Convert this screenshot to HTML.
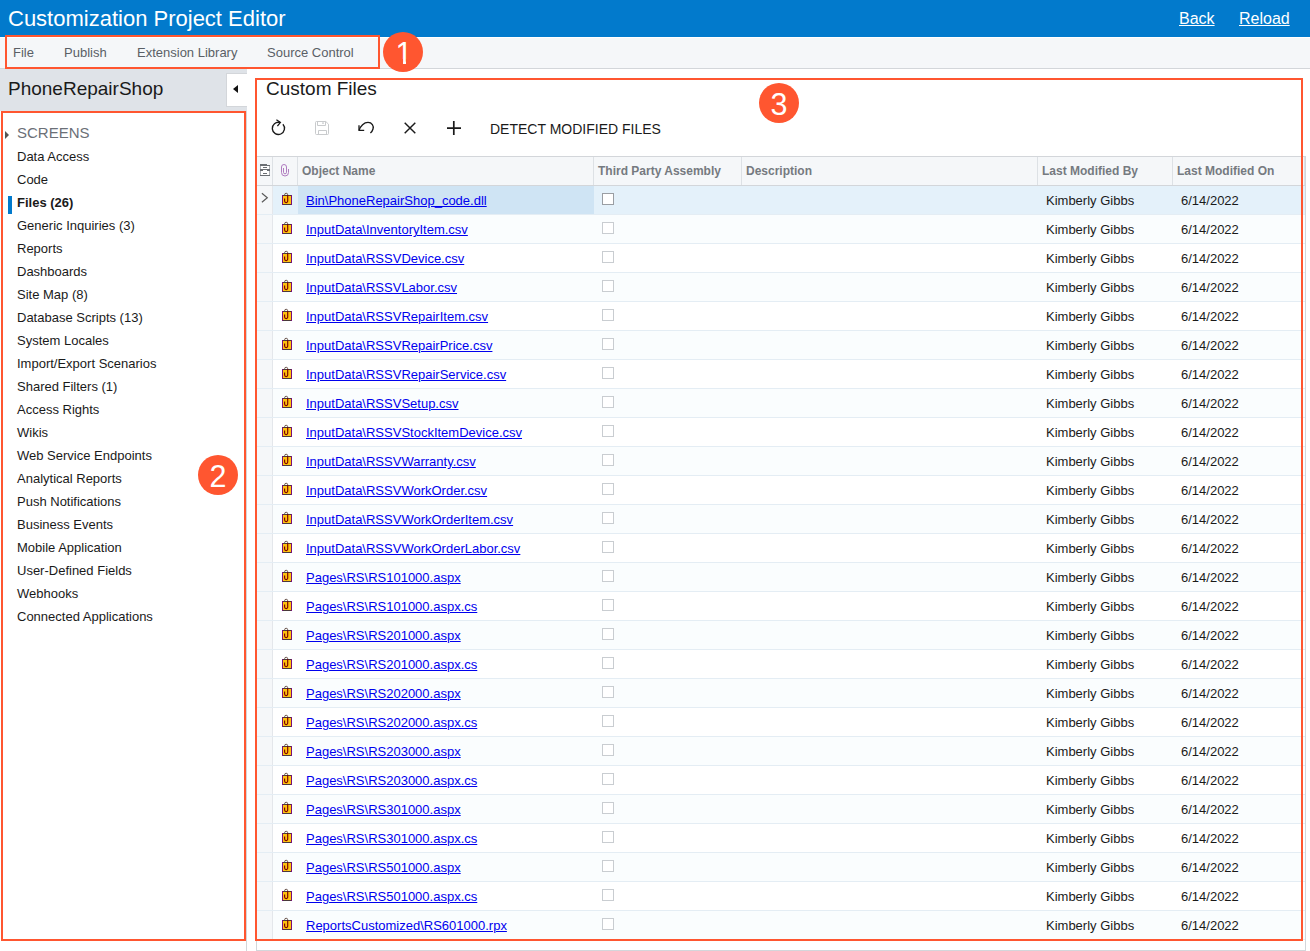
<!DOCTYPE html><html><head><meta charset="utf-8"><title>Customization Project Editor</title><style>*{box-sizing:border-box;margin:0;padding:0}
html,body{width:1310px;height:951px;overflow:hidden;background:#fff;font-family:"Liberation Sans",Arial,sans-serif;font-size:13px;color:#1a1a1a}
body{position:relative}
#hdr{position:absolute;left:0;top:0;width:1310px;height:37px;background:#027acc}
#hdr .ttl{position:absolute;left:8px;top:6px;font-size:22px;line-height:26px;color:#fff;white-space:nowrap}
#hdr .lnk{position:absolute;top:9px;font-size:16px;line-height:20px;color:#fff;text-decoration:underline}
#back{left:1179px}#reload{left:1239px}
#menu{position:absolute;left:0;top:37px;width:1310px;height:32px;background:#f5f7f9;border-top:1px solid #fff;border-bottom:1px solid #d3d6da}
#menu span{position:absolute;top:7px;line-height:16px;font-size:13px;color:#5a5f66;white-space:nowrap}
#lhead{position:absolute;left:0;top:69px;width:247px;height:42px;background:#dfe3e8}
#lhead span{position:absolute;left:8px;top:9px;font-size:19px;line-height:22px;color:#1a1a1a}
#collapse{position:absolute;left:226px;top:73px;width:21px;height:34px;background:#fff;border:1px solid #d3d6da;border-right:0}
#collapse i{position:absolute;left:6px;top:11px;border-right:5px solid #111;border-top:4px solid transparent;border-bottom:4px solid transparent}
#nav{position:absolute;left:0;top:111px;width:247px;height:840px;background:#fff;border-right:1px solid #d3d6da}
#nav .scr{position:absolute;left:17px;top:14px;font-size:15px;line-height:16px;color:#6b7077}
#nav .scr i{position:absolute;left:-12px;top:6px;border-left:4.5px solid #555;border-top:4px solid transparent;border-bottom:4px solid transparent}
#nav .ni{position:absolute;left:17px;margin-top:-110px;line-height:16px;font-size:13px;color:#1a1a1a;white-space:nowrap}
#nav .ni.sel{font-weight:bold}
#nav .ni.sel:before{content:"";position:absolute;left:-9px;top:1px;width:4px;height:18px;background:#027acc}
#main{position:absolute;left:0;top:0}
.ct{position:absolute;left:266px;top:77.5px;font-size:19px;line-height:22px;color:#1a1a1a;white-space:nowrap}
.tb{position:absolute}
.dmf{position:absolute;left:490px;top:121px;line-height:16px;font-size:14px;color:#1a1a1a;white-space:nowrap}
#grid{position:absolute;left:256px;top:156px;width:1050px;height:795px;overflow:hidden;border:1px solid #d3d6da}
.gh{position:absolute;left:0;top:0;width:1048px;height:29px;background:#f5f7f9;border-bottom:1px solid #d3d6da}
.hc{position:absolute;top:0;height:28px;border-right:1px solid #dde1e5}
.hc span{position:absolute;left:4px;top:6px;line-height:16px;font-size:12px;font-weight:bold;color:#757a80;white-space:nowrap}
.gr{position:absolute;left:0;width:1048px;height:29px;border-bottom:1px solid #e4edf4;background:#fff}
.gr.alt{background:#fafdfe}
.gr.sel{background:#e4f1fa}
.gr>div{position:absolute;top:0;height:28px;line-height:16px;white-space:nowrap}
.c0{left:0;width:16px;background:#f5f7f9;border-right:1px solid #e4e7eb}
.c0 svg{position:absolute;left:4px;top:6px}
.c1{left:16px;width:25px}
.c1 svg{position:absolute;left:8px;top:6px}
.c2{left:41px;width:296px;padding:7px 0 0 8px}
.gr.sel .c2{background:#cfe4f4}
.c2 a{color:#0000ee;text-decoration:underline}
.c3{left:337px;width:148px}
.c3 i{position:absolute;left:8px;top:7px;width:12px;height:12px;border:1px solid #c9cdd1;background:#fff}
.gr.sel .c3 i{border-color:#9a9ea3}
.c4{left:485px;width:296px}
.c5{left:781px;width:135px;padding:7px 0 0 8px}
.c6{left:916px;width:132px;padding:7px 0 0 8px}
.rb{position:absolute;border:2px solid #ff5630}
.cir{position:absolute;width:40px;height:40px;border-radius:50%;background:#ff5630;color:#fff;font-size:30.5px;line-height:42px;text-align:center}
.cir.one{padding-left:2px}
.cir.one:before,.cir.one:after{content:"";position:absolute;top:27px;height:7px;width:9px;background:#ff5630}
.cir.one:before{left:11px}
.cir.one:after{left:23px}
</style></head><body>
<div id="hdr"><span class="ttl">Customization Project Editor</span><a class="lnk" id="back">Back</a><a class="lnk" id="reload">Reload</a></div>
<div id="menu"><span style="left:13px">File</span><span style="left:64px">Publish</span><span style="left:137px">Extension Library</span><span style="left:267px">Source Control</span></div>
<div id="lhead"><span>PhoneRepairShop</span></div><div id="collapse"><i></i></div>
<div id="nav">
<div class="scr"><i></i>SCREENS</div>
<div class="ni" style="top:148px">Data Access</div>
<div class="ni" style="top:171px">Code</div>
<div class="ni sel" style="top:194px">Files (26)</div>
<div class="ni" style="top:217px">Generic Inquiries (3)</div>
<div class="ni" style="top:240px">Reports</div>
<div class="ni" style="top:263px">Dashboards</div>
<div class="ni" style="top:286px">Site Map (8)</div>
<div class="ni" style="top:309px">Database Scripts (13)</div>
<div class="ni" style="top:332px">System Locales</div>
<div class="ni" style="top:355px">Import/Export Scenarios</div>
<div class="ni" style="top:378px">Shared Filters (1)</div>
<div class="ni" style="top:401px">Access Rights</div>
<div class="ni" style="top:424px">Wikis</div>
<div class="ni" style="top:447px">Web Service Endpoints</div>
<div class="ni" style="top:470px">Analytical Reports</div>
<div class="ni" style="top:493px">Push Notifications</div>
<div class="ni" style="top:516px">Business Events</div>
<div class="ni" style="top:539px">Mobile Application</div>
<div class="ni" style="top:562px">User-Defined Fields</div>
<div class="ni" style="top:585px">Webhooks</div>
<div class="ni" style="top:608px">Connected Applications</div>
</div>
<div id="main"><div class="ct">Custom Files</div>
<svg class="tb" style="left:260px;top:112px" width="220" height="34" viewBox="260 112 220 34" fill="none" stroke="#1a1a1a" stroke-width="1.35">
<path d="M282.9 124.3 A6.1 6.1 0 1 1 279.9 122.5"/><path d="M276.4 119.8 L280.4 122.4 L277.4 126.2" stroke-width="1.3"/>
<g stroke="#c9cbcd" stroke-width="1"><path d="M316.5 121.5 H325.8 L328.5 124.2 V133.5 A1 1 0 0 1 327.5 134.5 H316.5 A1 1 0 0 1 315.5 133.5 V122.5 A1 1 0 0 1 316.5 121.5 Z"/><path d="M317.5 121.5 V125.5 H325.5 V121.5 M318.5 134.5 V130.5 H326.5 V134.5"/><path d="M323 122.2 V124" stroke-width="1.4"/></g>
<path d="M359.2 130 C360.5 126 364 122.4 368 122.4 C372 122.4 374 126 373 129 C372.5 130.8 371.6 132 370.4 133"/><path d="M359 125.3 V130.4 H364.2" stroke-width="1.3"/>
<path d="M404.7 122.7 L415.3 133.3 M415.3 122.7 L404.7 133.3" stroke-width="1.45"/>
<path d="M453.8 121 V135 M447 128.1 H461" stroke-width="1.7"/>
</svg>
<div class="dmf">DETECT MODIFIED FILES</div>
<div id="grid"><div class="gh">
<div class="hc" style="left:0;width:16px"><svg width="10" height="12" viewBox="0 0 10 12" style="position:absolute;left:3px;top:7px"><rect x="0.5" y="1.5" width="9" height="10" fill="#fff" stroke="#a9adb2" stroke-width="1"/><path d="M0 1.5 H10 M0 11.5 H10" stroke="#6a6e73" stroke-width="1"/><path d="M0 0.5 H7 M0 6 H10 M3 3.5 H7 M3 9.5 H7" fill="none" stroke="#6a6e73" stroke-width="1"/><path d="M0 6 H10" stroke="#6a6e73" stroke-width="2"/><path d="M3 6.5 H7" stroke="#fff" stroke-width="1"/></svg></div>
<div class="hc" style="left:16px;width:25px"><svg width="10" height="14" viewBox="0 0 10 14" style="position:absolute;left:7px;top:6px"><path d="M3.5 5 V9.3 A1.5 1.5 0 0 0 6.5 9.3 V4 A2.5 2.5 0 0 0 1.5 4 V9.5 A3.5 3.5 0 0 0 8.5 9.5 V6" fill="none" stroke="#b07cc0" stroke-width="1"/></svg></div>
<div class="hc" style="left:41px;width:296px"><span>Object Name</span></div>
<div class="hc" style="left:337px;width:148px"><span>Third Party Assembly</span></div>
<div class="hc" style="left:485px;width:296px"><span>Description</span></div>
<div class="hc" style="left:781px;width:135px"><span>Last Modified By</span></div>
<div class="hc" style="left:916px;width:132px"><span>Last Modified On</span></div>
</div>
<div class="gr sel" style="top:29px">
<div class="c0"><svg width="8" height="12" viewBox="0 0 8 12"><path d="M0.9 1.2 L6.3 5.75 L0.9 10.3" fill="none" stroke="#5a5a5a" stroke-width="1.2"/></svg></div>
<div class="c1"><svg width="12" height="14" viewBox="0 0 12 14"><rect x="1" y="3" width="10" height="10" fill="#ffc20e"/><path d="M1 3.5 H11 M1 12.5 H11" stroke="#4a3a3a" stroke-width="1"/><path d="M1.5 3 V13 M10.5 3 V13" stroke="#7a0f78" stroke-width="1"/><path d="M3.6 3.2 V2.8 A1.55 1.55 0 0 1 6.7 2.8 V3.2" fill="none" stroke="#6e5a52" stroke-width="1"/><path d="M6.7 3 V9 A1.55 1.55 0 0 1 3.6 9 V6.4" fill="none" stroke="#7a0000" stroke-width="1.15"/></svg></div>
<div class="c2"><a>Bin\PhoneRepairShop_code.dll</a></div>
<div class="c3"><i></i></div>
<div class="c4"></div>
<div class="c5">Kimberly Gibbs</div>
<div class="c6">6/14/2022</div>
</div>
<div class="gr alt" style="top:58px">
<div class="c0"></div>
<div class="c1"><svg width="12" height="14" viewBox="0 0 12 14"><rect x="1" y="3" width="10" height="10" fill="#ffc20e"/><path d="M1 3.5 H11 M1 12.5 H11" stroke="#4a3a3a" stroke-width="1"/><path d="M1.5 3 V13 M10.5 3 V13" stroke="#7a0f78" stroke-width="1"/><path d="M3.6 3.2 V2.8 A1.55 1.55 0 0 1 6.7 2.8 V3.2" fill="none" stroke="#6e5a52" stroke-width="1"/><path d="M6.7 3 V9 A1.55 1.55 0 0 1 3.6 9 V6.4" fill="none" stroke="#7a0000" stroke-width="1.15"/></svg></div>
<div class="c2"><a>InputData\InventoryItem.csv</a></div>
<div class="c3"><i></i></div>
<div class="c4"></div>
<div class="c5">Kimberly Gibbs</div>
<div class="c6">6/14/2022</div>
</div>
<div class="gr" style="top:87px">
<div class="c0"></div>
<div class="c1"><svg width="12" height="14" viewBox="0 0 12 14"><rect x="1" y="3" width="10" height="10" fill="#ffc20e"/><path d="M1 3.5 H11 M1 12.5 H11" stroke="#4a3a3a" stroke-width="1"/><path d="M1.5 3 V13 M10.5 3 V13" stroke="#7a0f78" stroke-width="1"/><path d="M3.6 3.2 V2.8 A1.55 1.55 0 0 1 6.7 2.8 V3.2" fill="none" stroke="#6e5a52" stroke-width="1"/><path d="M6.7 3 V9 A1.55 1.55 0 0 1 3.6 9 V6.4" fill="none" stroke="#7a0000" stroke-width="1.15"/></svg></div>
<div class="c2"><a>InputData\RSSVDevice.csv</a></div>
<div class="c3"><i></i></div>
<div class="c4"></div>
<div class="c5">Kimberly Gibbs</div>
<div class="c6">6/14/2022</div>
</div>
<div class="gr alt" style="top:116px">
<div class="c0"></div>
<div class="c1"><svg width="12" height="14" viewBox="0 0 12 14"><rect x="1" y="3" width="10" height="10" fill="#ffc20e"/><path d="M1 3.5 H11 M1 12.5 H11" stroke="#4a3a3a" stroke-width="1"/><path d="M1.5 3 V13 M10.5 3 V13" stroke="#7a0f78" stroke-width="1"/><path d="M3.6 3.2 V2.8 A1.55 1.55 0 0 1 6.7 2.8 V3.2" fill="none" stroke="#6e5a52" stroke-width="1"/><path d="M6.7 3 V9 A1.55 1.55 0 0 1 3.6 9 V6.4" fill="none" stroke="#7a0000" stroke-width="1.15"/></svg></div>
<div class="c2"><a>InputData\RSSVLabor.csv</a></div>
<div class="c3"><i></i></div>
<div class="c4"></div>
<div class="c5">Kimberly Gibbs</div>
<div class="c6">6/14/2022</div>
</div>
<div class="gr" style="top:145px">
<div class="c0"></div>
<div class="c1"><svg width="12" height="14" viewBox="0 0 12 14"><rect x="1" y="3" width="10" height="10" fill="#ffc20e"/><path d="M1 3.5 H11 M1 12.5 H11" stroke="#4a3a3a" stroke-width="1"/><path d="M1.5 3 V13 M10.5 3 V13" stroke="#7a0f78" stroke-width="1"/><path d="M3.6 3.2 V2.8 A1.55 1.55 0 0 1 6.7 2.8 V3.2" fill="none" stroke="#6e5a52" stroke-width="1"/><path d="M6.7 3 V9 A1.55 1.55 0 0 1 3.6 9 V6.4" fill="none" stroke="#7a0000" stroke-width="1.15"/></svg></div>
<div class="c2"><a>InputData\RSSVRepairItem.csv</a></div>
<div class="c3"><i></i></div>
<div class="c4"></div>
<div class="c5">Kimberly Gibbs</div>
<div class="c6">6/14/2022</div>
</div>
<div class="gr alt" style="top:174px">
<div class="c0"></div>
<div class="c1"><svg width="12" height="14" viewBox="0 0 12 14"><rect x="1" y="3" width="10" height="10" fill="#ffc20e"/><path d="M1 3.5 H11 M1 12.5 H11" stroke="#4a3a3a" stroke-width="1"/><path d="M1.5 3 V13 M10.5 3 V13" stroke="#7a0f78" stroke-width="1"/><path d="M3.6 3.2 V2.8 A1.55 1.55 0 0 1 6.7 2.8 V3.2" fill="none" stroke="#6e5a52" stroke-width="1"/><path d="M6.7 3 V9 A1.55 1.55 0 0 1 3.6 9 V6.4" fill="none" stroke="#7a0000" stroke-width="1.15"/></svg></div>
<div class="c2"><a>InputData\RSSVRepairPrice.csv</a></div>
<div class="c3"><i></i></div>
<div class="c4"></div>
<div class="c5">Kimberly Gibbs</div>
<div class="c6">6/14/2022</div>
</div>
<div class="gr" style="top:203px">
<div class="c0"></div>
<div class="c1"><svg width="12" height="14" viewBox="0 0 12 14"><rect x="1" y="3" width="10" height="10" fill="#ffc20e"/><path d="M1 3.5 H11 M1 12.5 H11" stroke="#4a3a3a" stroke-width="1"/><path d="M1.5 3 V13 M10.5 3 V13" stroke="#7a0f78" stroke-width="1"/><path d="M3.6 3.2 V2.8 A1.55 1.55 0 0 1 6.7 2.8 V3.2" fill="none" stroke="#6e5a52" stroke-width="1"/><path d="M6.7 3 V9 A1.55 1.55 0 0 1 3.6 9 V6.4" fill="none" stroke="#7a0000" stroke-width="1.15"/></svg></div>
<div class="c2"><a>InputData\RSSVRepairService.csv</a></div>
<div class="c3"><i></i></div>
<div class="c4"></div>
<div class="c5">Kimberly Gibbs</div>
<div class="c6">6/14/2022</div>
</div>
<div class="gr alt" style="top:232px">
<div class="c0"></div>
<div class="c1"><svg width="12" height="14" viewBox="0 0 12 14"><rect x="1" y="3" width="10" height="10" fill="#ffc20e"/><path d="M1 3.5 H11 M1 12.5 H11" stroke="#4a3a3a" stroke-width="1"/><path d="M1.5 3 V13 M10.5 3 V13" stroke="#7a0f78" stroke-width="1"/><path d="M3.6 3.2 V2.8 A1.55 1.55 0 0 1 6.7 2.8 V3.2" fill="none" stroke="#6e5a52" stroke-width="1"/><path d="M6.7 3 V9 A1.55 1.55 0 0 1 3.6 9 V6.4" fill="none" stroke="#7a0000" stroke-width="1.15"/></svg></div>
<div class="c2"><a>InputData\RSSVSetup.csv</a></div>
<div class="c3"><i></i></div>
<div class="c4"></div>
<div class="c5">Kimberly Gibbs</div>
<div class="c6">6/14/2022</div>
</div>
<div class="gr" style="top:261px">
<div class="c0"></div>
<div class="c1"><svg width="12" height="14" viewBox="0 0 12 14"><rect x="1" y="3" width="10" height="10" fill="#ffc20e"/><path d="M1 3.5 H11 M1 12.5 H11" stroke="#4a3a3a" stroke-width="1"/><path d="M1.5 3 V13 M10.5 3 V13" stroke="#7a0f78" stroke-width="1"/><path d="M3.6 3.2 V2.8 A1.55 1.55 0 0 1 6.7 2.8 V3.2" fill="none" stroke="#6e5a52" stroke-width="1"/><path d="M6.7 3 V9 A1.55 1.55 0 0 1 3.6 9 V6.4" fill="none" stroke="#7a0000" stroke-width="1.15"/></svg></div>
<div class="c2"><a>InputData\RSSVStockItemDevice.csv</a></div>
<div class="c3"><i></i></div>
<div class="c4"></div>
<div class="c5">Kimberly Gibbs</div>
<div class="c6">6/14/2022</div>
</div>
<div class="gr alt" style="top:290px">
<div class="c0"></div>
<div class="c1"><svg width="12" height="14" viewBox="0 0 12 14"><rect x="1" y="3" width="10" height="10" fill="#ffc20e"/><path d="M1 3.5 H11 M1 12.5 H11" stroke="#4a3a3a" stroke-width="1"/><path d="M1.5 3 V13 M10.5 3 V13" stroke="#7a0f78" stroke-width="1"/><path d="M3.6 3.2 V2.8 A1.55 1.55 0 0 1 6.7 2.8 V3.2" fill="none" stroke="#6e5a52" stroke-width="1"/><path d="M6.7 3 V9 A1.55 1.55 0 0 1 3.6 9 V6.4" fill="none" stroke="#7a0000" stroke-width="1.15"/></svg></div>
<div class="c2"><a>InputData\RSSVWarranty.csv</a></div>
<div class="c3"><i></i></div>
<div class="c4"></div>
<div class="c5">Kimberly Gibbs</div>
<div class="c6">6/14/2022</div>
</div>
<div class="gr" style="top:319px">
<div class="c0"></div>
<div class="c1"><svg width="12" height="14" viewBox="0 0 12 14"><rect x="1" y="3" width="10" height="10" fill="#ffc20e"/><path d="M1 3.5 H11 M1 12.5 H11" stroke="#4a3a3a" stroke-width="1"/><path d="M1.5 3 V13 M10.5 3 V13" stroke="#7a0f78" stroke-width="1"/><path d="M3.6 3.2 V2.8 A1.55 1.55 0 0 1 6.7 2.8 V3.2" fill="none" stroke="#6e5a52" stroke-width="1"/><path d="M6.7 3 V9 A1.55 1.55 0 0 1 3.6 9 V6.4" fill="none" stroke="#7a0000" stroke-width="1.15"/></svg></div>
<div class="c2"><a>InputData\RSSVWorkOrder.csv</a></div>
<div class="c3"><i></i></div>
<div class="c4"></div>
<div class="c5">Kimberly Gibbs</div>
<div class="c6">6/14/2022</div>
</div>
<div class="gr alt" style="top:348px">
<div class="c0"></div>
<div class="c1"><svg width="12" height="14" viewBox="0 0 12 14"><rect x="1" y="3" width="10" height="10" fill="#ffc20e"/><path d="M1 3.5 H11 M1 12.5 H11" stroke="#4a3a3a" stroke-width="1"/><path d="M1.5 3 V13 M10.5 3 V13" stroke="#7a0f78" stroke-width="1"/><path d="M3.6 3.2 V2.8 A1.55 1.55 0 0 1 6.7 2.8 V3.2" fill="none" stroke="#6e5a52" stroke-width="1"/><path d="M6.7 3 V9 A1.55 1.55 0 0 1 3.6 9 V6.4" fill="none" stroke="#7a0000" stroke-width="1.15"/></svg></div>
<div class="c2"><a>InputData\RSSVWorkOrderItem.csv</a></div>
<div class="c3"><i></i></div>
<div class="c4"></div>
<div class="c5">Kimberly Gibbs</div>
<div class="c6">6/14/2022</div>
</div>
<div class="gr" style="top:377px">
<div class="c0"></div>
<div class="c1"><svg width="12" height="14" viewBox="0 0 12 14"><rect x="1" y="3" width="10" height="10" fill="#ffc20e"/><path d="M1 3.5 H11 M1 12.5 H11" stroke="#4a3a3a" stroke-width="1"/><path d="M1.5 3 V13 M10.5 3 V13" stroke="#7a0f78" stroke-width="1"/><path d="M3.6 3.2 V2.8 A1.55 1.55 0 0 1 6.7 2.8 V3.2" fill="none" stroke="#6e5a52" stroke-width="1"/><path d="M6.7 3 V9 A1.55 1.55 0 0 1 3.6 9 V6.4" fill="none" stroke="#7a0000" stroke-width="1.15"/></svg></div>
<div class="c2"><a>InputData\RSSVWorkOrderLabor.csv</a></div>
<div class="c3"><i></i></div>
<div class="c4"></div>
<div class="c5">Kimberly Gibbs</div>
<div class="c6">6/14/2022</div>
</div>
<div class="gr alt" style="top:406px">
<div class="c0"></div>
<div class="c1"><svg width="12" height="14" viewBox="0 0 12 14"><rect x="1" y="3" width="10" height="10" fill="#ffc20e"/><path d="M1 3.5 H11 M1 12.5 H11" stroke="#4a3a3a" stroke-width="1"/><path d="M1.5 3 V13 M10.5 3 V13" stroke="#7a0f78" stroke-width="1"/><path d="M3.6 3.2 V2.8 A1.55 1.55 0 0 1 6.7 2.8 V3.2" fill="none" stroke="#6e5a52" stroke-width="1"/><path d="M6.7 3 V9 A1.55 1.55 0 0 1 3.6 9 V6.4" fill="none" stroke="#7a0000" stroke-width="1.15"/></svg></div>
<div class="c2"><a>Pages\RS\RS101000.aspx</a></div>
<div class="c3"><i></i></div>
<div class="c4"></div>
<div class="c5">Kimberly Gibbs</div>
<div class="c6">6/14/2022</div>
</div>
<div class="gr" style="top:435px">
<div class="c0"></div>
<div class="c1"><svg width="12" height="14" viewBox="0 0 12 14"><rect x="1" y="3" width="10" height="10" fill="#ffc20e"/><path d="M1 3.5 H11 M1 12.5 H11" stroke="#4a3a3a" stroke-width="1"/><path d="M1.5 3 V13 M10.5 3 V13" stroke="#7a0f78" stroke-width="1"/><path d="M3.6 3.2 V2.8 A1.55 1.55 0 0 1 6.7 2.8 V3.2" fill="none" stroke="#6e5a52" stroke-width="1"/><path d="M6.7 3 V9 A1.55 1.55 0 0 1 3.6 9 V6.4" fill="none" stroke="#7a0000" stroke-width="1.15"/></svg></div>
<div class="c2"><a>Pages\RS\RS101000.aspx.cs</a></div>
<div class="c3"><i></i></div>
<div class="c4"></div>
<div class="c5">Kimberly Gibbs</div>
<div class="c6">6/14/2022</div>
</div>
<div class="gr alt" style="top:464px">
<div class="c0"></div>
<div class="c1"><svg width="12" height="14" viewBox="0 0 12 14"><rect x="1" y="3" width="10" height="10" fill="#ffc20e"/><path d="M1 3.5 H11 M1 12.5 H11" stroke="#4a3a3a" stroke-width="1"/><path d="M1.5 3 V13 M10.5 3 V13" stroke="#7a0f78" stroke-width="1"/><path d="M3.6 3.2 V2.8 A1.55 1.55 0 0 1 6.7 2.8 V3.2" fill="none" stroke="#6e5a52" stroke-width="1"/><path d="M6.7 3 V9 A1.55 1.55 0 0 1 3.6 9 V6.4" fill="none" stroke="#7a0000" stroke-width="1.15"/></svg></div>
<div class="c2"><a>Pages\RS\RS201000.aspx</a></div>
<div class="c3"><i></i></div>
<div class="c4"></div>
<div class="c5">Kimberly Gibbs</div>
<div class="c6">6/14/2022</div>
</div>
<div class="gr" style="top:493px">
<div class="c0"></div>
<div class="c1"><svg width="12" height="14" viewBox="0 0 12 14"><rect x="1" y="3" width="10" height="10" fill="#ffc20e"/><path d="M1 3.5 H11 M1 12.5 H11" stroke="#4a3a3a" stroke-width="1"/><path d="M1.5 3 V13 M10.5 3 V13" stroke="#7a0f78" stroke-width="1"/><path d="M3.6 3.2 V2.8 A1.55 1.55 0 0 1 6.7 2.8 V3.2" fill="none" stroke="#6e5a52" stroke-width="1"/><path d="M6.7 3 V9 A1.55 1.55 0 0 1 3.6 9 V6.4" fill="none" stroke="#7a0000" stroke-width="1.15"/></svg></div>
<div class="c2"><a>Pages\RS\RS201000.aspx.cs</a></div>
<div class="c3"><i></i></div>
<div class="c4"></div>
<div class="c5">Kimberly Gibbs</div>
<div class="c6">6/14/2022</div>
</div>
<div class="gr alt" style="top:522px">
<div class="c0"></div>
<div class="c1"><svg width="12" height="14" viewBox="0 0 12 14"><rect x="1" y="3" width="10" height="10" fill="#ffc20e"/><path d="M1 3.5 H11 M1 12.5 H11" stroke="#4a3a3a" stroke-width="1"/><path d="M1.5 3 V13 M10.5 3 V13" stroke="#7a0f78" stroke-width="1"/><path d="M3.6 3.2 V2.8 A1.55 1.55 0 0 1 6.7 2.8 V3.2" fill="none" stroke="#6e5a52" stroke-width="1"/><path d="M6.7 3 V9 A1.55 1.55 0 0 1 3.6 9 V6.4" fill="none" stroke="#7a0000" stroke-width="1.15"/></svg></div>
<div class="c2"><a>Pages\RS\RS202000.aspx</a></div>
<div class="c3"><i></i></div>
<div class="c4"></div>
<div class="c5">Kimberly Gibbs</div>
<div class="c6">6/14/2022</div>
</div>
<div class="gr" style="top:551px">
<div class="c0"></div>
<div class="c1"><svg width="12" height="14" viewBox="0 0 12 14"><rect x="1" y="3" width="10" height="10" fill="#ffc20e"/><path d="M1 3.5 H11 M1 12.5 H11" stroke="#4a3a3a" stroke-width="1"/><path d="M1.5 3 V13 M10.5 3 V13" stroke="#7a0f78" stroke-width="1"/><path d="M3.6 3.2 V2.8 A1.55 1.55 0 0 1 6.7 2.8 V3.2" fill="none" stroke="#6e5a52" stroke-width="1"/><path d="M6.7 3 V9 A1.55 1.55 0 0 1 3.6 9 V6.4" fill="none" stroke="#7a0000" stroke-width="1.15"/></svg></div>
<div class="c2"><a>Pages\RS\RS202000.aspx.cs</a></div>
<div class="c3"><i></i></div>
<div class="c4"></div>
<div class="c5">Kimberly Gibbs</div>
<div class="c6">6/14/2022</div>
</div>
<div class="gr alt" style="top:580px">
<div class="c0"></div>
<div class="c1"><svg width="12" height="14" viewBox="0 0 12 14"><rect x="1" y="3" width="10" height="10" fill="#ffc20e"/><path d="M1 3.5 H11 M1 12.5 H11" stroke="#4a3a3a" stroke-width="1"/><path d="M1.5 3 V13 M10.5 3 V13" stroke="#7a0f78" stroke-width="1"/><path d="M3.6 3.2 V2.8 A1.55 1.55 0 0 1 6.7 2.8 V3.2" fill="none" stroke="#6e5a52" stroke-width="1"/><path d="M6.7 3 V9 A1.55 1.55 0 0 1 3.6 9 V6.4" fill="none" stroke="#7a0000" stroke-width="1.15"/></svg></div>
<div class="c2"><a>Pages\RS\RS203000.aspx</a></div>
<div class="c3"><i></i></div>
<div class="c4"></div>
<div class="c5">Kimberly Gibbs</div>
<div class="c6">6/14/2022</div>
</div>
<div class="gr" style="top:609px">
<div class="c0"></div>
<div class="c1"><svg width="12" height="14" viewBox="0 0 12 14"><rect x="1" y="3" width="10" height="10" fill="#ffc20e"/><path d="M1 3.5 H11 M1 12.5 H11" stroke="#4a3a3a" stroke-width="1"/><path d="M1.5 3 V13 M10.5 3 V13" stroke="#7a0f78" stroke-width="1"/><path d="M3.6 3.2 V2.8 A1.55 1.55 0 0 1 6.7 2.8 V3.2" fill="none" stroke="#6e5a52" stroke-width="1"/><path d="M6.7 3 V9 A1.55 1.55 0 0 1 3.6 9 V6.4" fill="none" stroke="#7a0000" stroke-width="1.15"/></svg></div>
<div class="c2"><a>Pages\RS\RS203000.aspx.cs</a></div>
<div class="c3"><i></i></div>
<div class="c4"></div>
<div class="c5">Kimberly Gibbs</div>
<div class="c6">6/14/2022</div>
</div>
<div class="gr alt" style="top:638px">
<div class="c0"></div>
<div class="c1"><svg width="12" height="14" viewBox="0 0 12 14"><rect x="1" y="3" width="10" height="10" fill="#ffc20e"/><path d="M1 3.5 H11 M1 12.5 H11" stroke="#4a3a3a" stroke-width="1"/><path d="M1.5 3 V13 M10.5 3 V13" stroke="#7a0f78" stroke-width="1"/><path d="M3.6 3.2 V2.8 A1.55 1.55 0 0 1 6.7 2.8 V3.2" fill="none" stroke="#6e5a52" stroke-width="1"/><path d="M6.7 3 V9 A1.55 1.55 0 0 1 3.6 9 V6.4" fill="none" stroke="#7a0000" stroke-width="1.15"/></svg></div>
<div class="c2"><a>Pages\RS\RS301000.aspx</a></div>
<div class="c3"><i></i></div>
<div class="c4"></div>
<div class="c5">Kimberly Gibbs</div>
<div class="c6">6/14/2022</div>
</div>
<div class="gr" style="top:667px">
<div class="c0"></div>
<div class="c1"><svg width="12" height="14" viewBox="0 0 12 14"><rect x="1" y="3" width="10" height="10" fill="#ffc20e"/><path d="M1 3.5 H11 M1 12.5 H11" stroke="#4a3a3a" stroke-width="1"/><path d="M1.5 3 V13 M10.5 3 V13" stroke="#7a0f78" stroke-width="1"/><path d="M3.6 3.2 V2.8 A1.55 1.55 0 0 1 6.7 2.8 V3.2" fill="none" stroke="#6e5a52" stroke-width="1"/><path d="M6.7 3 V9 A1.55 1.55 0 0 1 3.6 9 V6.4" fill="none" stroke="#7a0000" stroke-width="1.15"/></svg></div>
<div class="c2"><a>Pages\RS\RS301000.aspx.cs</a></div>
<div class="c3"><i></i></div>
<div class="c4"></div>
<div class="c5">Kimberly Gibbs</div>
<div class="c6">6/14/2022</div>
</div>
<div class="gr alt" style="top:696px">
<div class="c0"></div>
<div class="c1"><svg width="12" height="14" viewBox="0 0 12 14"><rect x="1" y="3" width="10" height="10" fill="#ffc20e"/><path d="M1 3.5 H11 M1 12.5 H11" stroke="#4a3a3a" stroke-width="1"/><path d="M1.5 3 V13 M10.5 3 V13" stroke="#7a0f78" stroke-width="1"/><path d="M3.6 3.2 V2.8 A1.55 1.55 0 0 1 6.7 2.8 V3.2" fill="none" stroke="#6e5a52" stroke-width="1"/><path d="M6.7 3 V9 A1.55 1.55 0 0 1 3.6 9 V6.4" fill="none" stroke="#7a0000" stroke-width="1.15"/></svg></div>
<div class="c2"><a>Pages\RS\RS501000.aspx</a></div>
<div class="c3"><i></i></div>
<div class="c4"></div>
<div class="c5">Kimberly Gibbs</div>
<div class="c6">6/14/2022</div>
</div>
<div class="gr" style="top:725px">
<div class="c0"></div>
<div class="c1"><svg width="12" height="14" viewBox="0 0 12 14"><rect x="1" y="3" width="10" height="10" fill="#ffc20e"/><path d="M1 3.5 H11 M1 12.5 H11" stroke="#4a3a3a" stroke-width="1"/><path d="M1.5 3 V13 M10.5 3 V13" stroke="#7a0f78" stroke-width="1"/><path d="M3.6 3.2 V2.8 A1.55 1.55 0 0 1 6.7 2.8 V3.2" fill="none" stroke="#6e5a52" stroke-width="1"/><path d="M6.7 3 V9 A1.55 1.55 0 0 1 3.6 9 V6.4" fill="none" stroke="#7a0000" stroke-width="1.15"/></svg></div>
<div class="c2"><a>Pages\RS\RS501000.aspx.cs</a></div>
<div class="c3"><i></i></div>
<div class="c4"></div>
<div class="c5">Kimberly Gibbs</div>
<div class="c6">6/14/2022</div>
</div>
<div class="gr alt" style="top:754px">
<div class="c0"></div>
<div class="c1"><svg width="12" height="14" viewBox="0 0 12 14"><rect x="1" y="3" width="10" height="10" fill="#ffc20e"/><path d="M1 3.5 H11 M1 12.5 H11" stroke="#4a3a3a" stroke-width="1"/><path d="M1.5 3 V13 M10.5 3 V13" stroke="#7a0f78" stroke-width="1"/><path d="M3.6 3.2 V2.8 A1.55 1.55 0 0 1 6.7 2.8 V3.2" fill="none" stroke="#6e5a52" stroke-width="1"/><path d="M6.7 3 V9 A1.55 1.55 0 0 1 3.6 9 V6.4" fill="none" stroke="#7a0000" stroke-width="1.15"/></svg></div>
<div class="c2"><a>ReportsCustomized\RS601000.rpx</a></div>
<div class="c3"><i></i></div>
<div class="c4"></div>
<div class="c5">Kimberly Gibbs</div>
<div class="c6">6/14/2022</div>
</div>
</div>
</div>
<div class="rb" style="left:5px;top:35px;width:375px;height:34px"></div>
<div class="rb" style="left:1px;top:111px;width:245px;height:830px"></div>
<div class="rb" style="left:255px;top:78px;width:1048px;height:863px"></div>
<div class="cir one" style="left:383px;top:32px">1</div>
<div class="cir" style="left:198px;top:455px">2</div>
<div class="cir" style="left:759px;top:83px">3</div>
</body></html>
